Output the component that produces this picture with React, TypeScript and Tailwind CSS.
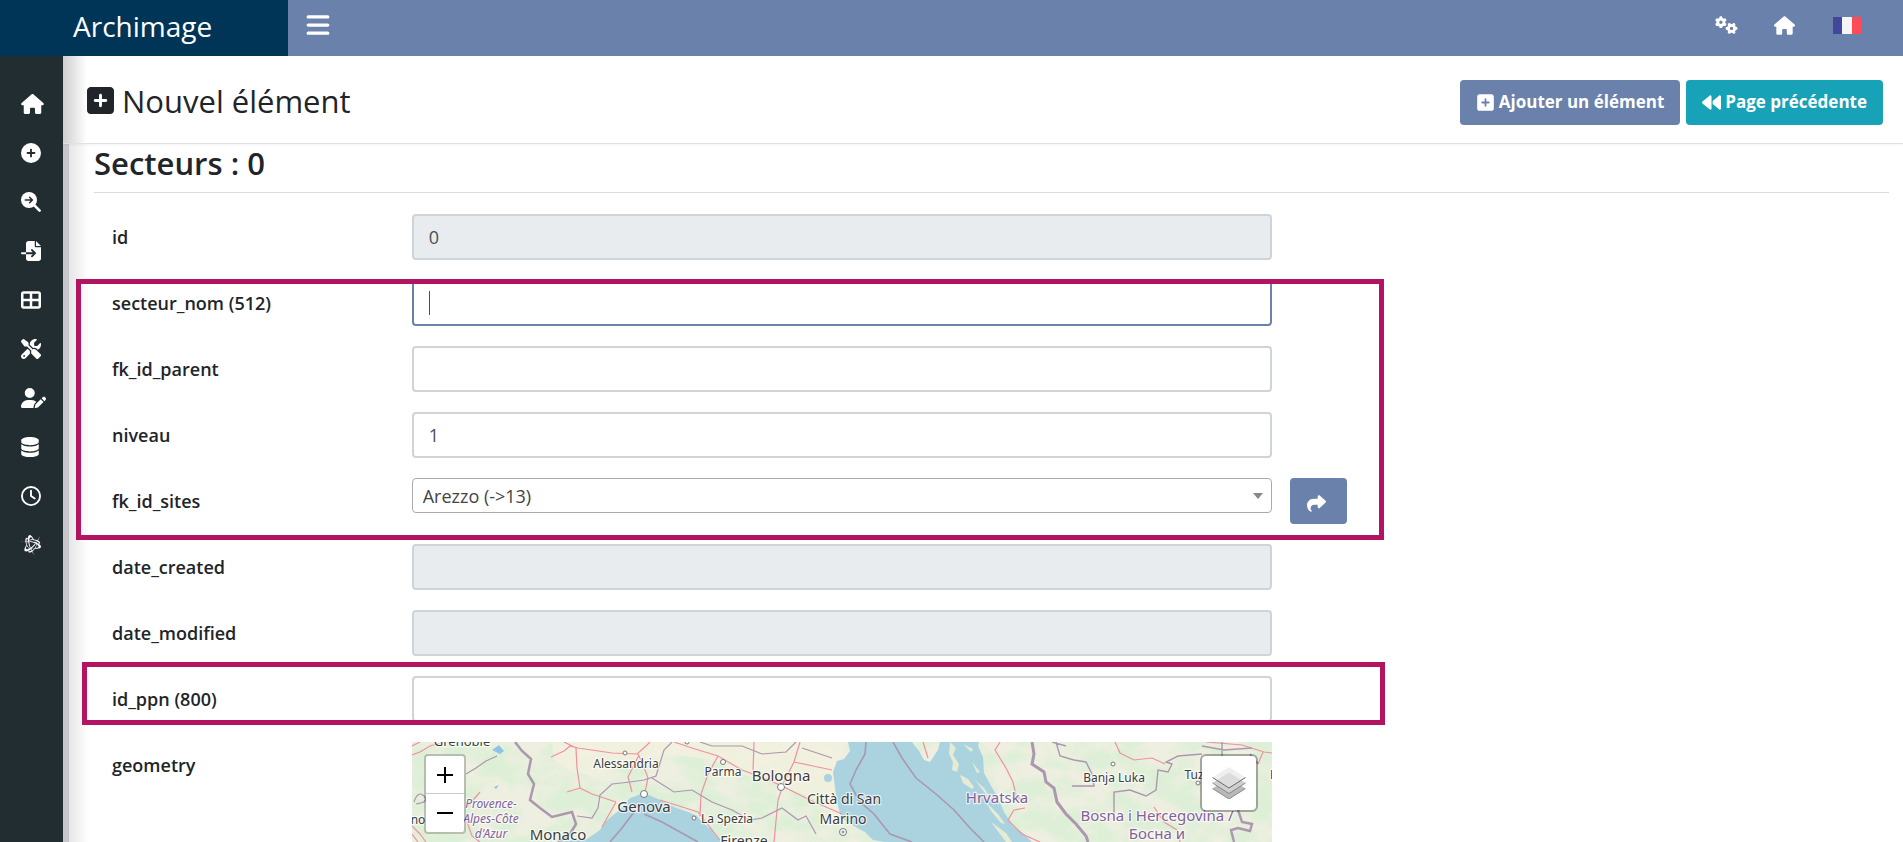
import React from 'react';
import {
  FaBackward,
  FaBars,
  FaBattleNet,
  FaCirclePlus,
  FaDatabase,
  FaFileImport,
  FaGears,
  FaHouse,
  FaRegClock,
  FaScrewdriverWrench,
  FaShare,
  FaSquarePlus,
  FaTableCellsLarge,
  FaUserPen,
} from 'react-icons/fa6';

interface Field {
  name: string;
  label: string;
  value?: string;
  readOnly?: boolean;
  focused?: boolean;
}

const SearchArrow: React.FC<{ className?: string }> = ({ className }) => (
  <svg className={className} viewBox="0 0 20 20" aria-hidden="true">
    <circle cx="8" cy="8" r="8" fill="currentColor" />
    <path d="M13 13l5.6 5.6" stroke="currentColor" strokeWidth="2.6" strokeLinecap="round" />
    <path d="M4.3 8h7M8.6 5.2L11.4 8l-2.8 2.8" fill="none" stroke="#222d32" strokeWidth="1.5" strokeLinecap="round" strokeLinejoin="round" />
  </svg>
);

const menu = [
  { label: 'Accueil', icon: <FaHouse className="h-5 w-[23px]" /> },
  { label: 'Ajouter', icon: <FaCirclePlus className="size-5" /> },
  { label: 'Rechercher', icon: <SearchArrow className="size-5" /> },
  { label: 'Importer', icon: <FaFileImport className="size-5" /> },
  { label: 'Tables', icon: <FaTableCellsLarge className="size-5" /> },
  { label: 'Outils', icon: <FaScrewdriverWrench className="size-5" /> },
  { label: 'Utilisateurs', icon: <FaUserPen className="h-5 w-[25px]" /> },
  { label: 'Base de données', icon: <FaDatabase className="h-5 w-[18px]" /> },
  { label: 'Historique', icon: <FaRegClock className="size-5" /> },
  { label: 'Réseau', icon: <FaBattleNet className="size-5" /> },
];

const FieldRow: React.FC<{ field: Field }> = ({ field }) => (
  <div className="flex">
    <label htmlFor={field.name} className="w-1/6 pl-3 pt-[9px] text-lg leading-7 font-semibold">
      {field.label}
    </label>
    <div className="relative w-1/2 px-[15px]">
      <input
        id={field.name}
        type="text"
        defaultValue={field.value}
        readOnly={field.readOnly}
        autoFocus={field.focused}
        className="block h-[46px] w-full rounded border-2 border-[#ced4da] bg-white px-[15px] text-lg text-[#495057] caret-transparent outline-none read-only:bg-[#e9ecef] focus:border-[#6a81ab]"
      />
      {field.focused && <span className="pointer-events-none absolute top-[11px] left-8 h-6 w-px bg-[#495057]" />}
    </div>
  </div>
);

const road = { fill: 'none', stroke: '#f0919f', strokeWidth: 1.2 };
const border = { fill: 'none', stroke: '#ab97ae', strokeWidth: 1.5 };
const sea = '#aad3df';

const MapTiles: React.FC = () => (
  <svg
    className="absolute inset-0 h-full w-full font-['Noto_Sans','Open_Sans',sans-serif]"
    viewBox="0 0 860 400"
    preserveAspectRatio="xMinYMin slice"
    role="img"
    aria-label="Carte"
  >
    <defs>
      <filter id="forest" x="0" y="0" width="100%" height="100%">
        <feTurbulence type="fractalNoise" baseFrequency="0.03 0.045" numOctaves="6" seed="8" />
        <feColorMatrix values="0 0 0 0 0.73  0 0 0 0 0.86  0 0 0 0 0.68  0 4 0 0 -1.45" />
      </filter>
    </defs>
    <rect width="860" height="400" fill="#eeefe0" />
    <rect width="860" height="400" filter="url(#forest)" />
    {/* Po valley */}
    <path d="M140 0H436L426 18 421 30 424 56 405 58 370 44 330 32 300 18 270 14 250 12 222 24 180 34 160 30 142 18Z" fill="#f2f0de" opacity="0.8" />

    {/* Ligurian sea */}
    <path d="M146 100L160 98 175 97 188 88 193 80 205 70 218 56 232 51 246 57 262 65 276 70 285 74 290 80 300 88 304 94 309 100V400H146Z" fill={sea} />
    {/* Adriatic */}
    <path d="M436 0L438 9 432 17 425 19 421 30 423 45 425 60 429 75 438 82 453 90 461 98 473 100V400H640L620 100 612 92 601 84 592 70 585 54 578 42 572 31 571 15 566 4 567 0H528L526 8 518 20 512 18 507 9 500 0Z" fill={sea} />
    <path d="M538 0L544 6 541 13 547 22 545 30 540 28 541 20 537 12ZM548 33L556 37 562 45 560 47 551 41ZM560 20L568 30 565 31ZM551 2L561 7 559 10ZM563 38L572 46 579 56 576 55ZM574 60L586 72 593 82 589 81 579 69ZM579 80L594 91 600 100H594Z" fill="#e6ecd4" />
    <circle cx="416" cy="36" r="4" fill={sea} />
    <path d="M80 8l7-5 5 6-4 3zM82 45l5-2-3 4z" fill="#8fc3e4" />

    {/* roads */}
    <g {...road}>
      <path d="M0 13L8 10 18 4 32 0M0 4L8 0M0 84L8 92 14 100M0 92L6 100" />
      <path d="M139 15L152 9 158 4 166 6 200 11 225 12 234 4 238 0M152 0L164 6 165 26 168 46 180 52 204 60M155 50L168 46M227 13L216 35 220 50M233 50L236 36 230 20 226 12" />
      <path d="M262 0L280 6 306 14 330 28 352 36 370 44 398 58 430 72M342 0L341 30M388 0L382 20 372 40 366 58 362 100M382 20L420 28M306 14L296 32 289 52 288 74M248 58L286 70 308 98M190 85L204 60M55 80L60 94 68 100M68 50L56 64" />
      <path d="M511 0L516 16M588 0L583 8 594 26 601 40 604 54 613 60M613 66L602 68 596 78 610 92 628 100M703 0L708 11 722 18 740 16 753 22M742 65L752 80 765 88 768 100M794 0L830 3 852 10 860 11M851 10L846 22" />
    </g>
    {/* borders */}
    <g {...border}>
      <path d="M103 0L110 9 119 17 116 32 122 42 118 58 128 66 140 75 160 70 164 82 158 92 146 100" strokeWidth="2.5" />
      <path d="M85 14L74 19 64 26 54 32M165 74L180 76 186 66 188 53 200 42 218 40 232 38 244 34 252 8 260 0M240 36L262 50 280 48 300 60 320 68 338 78 350 76 370 66 386 78 394 74 404 92M384 0L374 10 350 12 330 4 300 4 288 0M420 16L390 6M2 60Q6 48 12 54T4 62" strokeWidth="1.2" />
      <path d="M222 70L210 86 198 100M232 72L250 80 268 90 286 100M454 0L453 12 444 28 438 42 448 60 462 72 478 92 500 100M481 0L490 16 504 36 524 52 542 68 558 86 572 100" strokeWidth="1.6" />
      <path d="M620 0L622 12 620 22 632 30 634 40 642 46 645 60 654 72 664 82 674 94 676 100" strokeWidth="3" />
      <path d="M644 0L648 14 662 18 674 20 680 32 682 44 660 44M702 78V50L718 48 734 54 744 48 746 28 756 30 760 22 754 20 766 14 790 12M654 4L640 0M790 4L812 8 840 6M810 0V14M846 22L838 12" strokeWidth="1.4" />
      <path d="M826 68L830 80 840 82 838 89 826 86 819 88 822 100" strokeWidth="2.4" />
    </g>

    {/* towns */}
    <g fill="#fff" stroke="#777" strokeWidth="1">
      <circle cx="232" cy="52" r="3.5" />
      <circle cx="369" cy="45" r="3.5" />
      <circle cx="213" cy="11" r="2" />
      <circle cx="311" cy="20" r="2.5" />
      <circle cx="282" cy="76" r="2" />
      <circle cx="275" cy="0" r="2" />
      <circle cx="431" cy="90" r="3.5" />
      <circle cx="431" cy="90" r="1" />
      <circle cx="701" cy="22" r="2" />
      <circle cx="786" cy="41" r="2" />
    </g>
    <g fill="#3d3d3d" stroke="#fff" strokeOpacity="0.7" strokeWidth="2.5" strokeLinejoin="round" paintOrder="stroke" textAnchor="middle" fontSize="12">
      <text x="50" y="4" fontSize="13">Grenoble</text>
      <text x="6" y="82">no</text>
      <text x="214" y="26">Alessandria</text>
      <text x="232" y="70" fontSize="15">Genova</text>
      <text x="146" y="98" fontSize="15">Monaco</text>
      <text x="315" y="81">La Spezia</text>
      <text x="311" y="34">Parma</text>
      <text x="369" y="39" fontSize="15">Bologna</text>
      <text x="432" y="62" fontSize="14">Città di San</text>
      <text x="431" y="82" fontSize="14">Marino</text>
      <text x="332" y="104" fontSize="14">Firenze</text>
      <text x="702" y="40">Banja Luka</text>
      <text x="787" y="37">Tuzla</text>
      <text x="862" y="37">B</text>
    </g>
    <g fill="#84619a" stroke="#fff" strokeOpacity="0.7" strokeWidth="2.5" strokeLinejoin="round" paintOrder="stroke" textAnchor="middle" fontSize="15">
      <g fontSize="12" fontStyle="italic">
        <text x="79" y="66">Provence-</text>
        <text x="79" y="81">Alpes-Côte</text>
        <text x="79" y="96">d'Azur</text>
      </g>
      <text x="585" y="61">Hrvatska</text>
      <text x="745" y="79">Bosna i Hercegovina /</text>
      <text x="745" y="97">Босна и</text>
    </g>
  </svg>
);

const LayersIcon: React.FC = () => (
  <svg className="h-8 w-[34px]" viewBox="0 0 34 32" aria-hidden="true">
    <path d="M17 11L33.5 21.5 17 32 .5 21.5Z" fill="#b9b9b9" />
    <path d="M.5 21.5L17 32 33.5 21.5" fill="none" stroke="#777" strokeWidth="0.8" />
    <path d="M17 5.5L33.5 16 17 26.5 .5 16Z" fill="#cfcfcf" />
    <path d="M.5 16L17 26.5 33.5 16" fill="none" stroke="#777" strokeWidth="0.8" />
    <path d="M17 0L33.5 10.5 17 21 .5 10.5Z" fill="#efefef" />
    <path d="M17 5.5L29 13 17 20.5 5 13Z" fill="#dcdcdc" />
    <path d="M.5 10.5L17 21 33.5 10.5" fill="none" stroke="#666" />
  </svg>
);

const FieldMap: React.FC = () => (
  <div className="relative h-[400px] overflow-hidden bg-[#f1f0e3]">
    <MapTiles />
    <div className="absolute top-3 left-3 flex w-[42px] flex-col rounded border-2 border-black/20 bg-white bg-clip-padding">
      <button type="button" aria-label="Zoom avant" className="flex h-[38px] items-center justify-center border-b border-[#ccc]">
        <svg className="size-4" viewBox="0 0 16 16" stroke="#000" strokeWidth="2"><path d="M0 8h16M8 0v16" /></svg>
      </button>
      <button type="button" aria-label="Zoom arrière" className="flex h-[38px] items-center justify-center">
        <svg className="size-4" viewBox="0 0 16 16" stroke="#000" strokeWidth="2"><path d="M0 8h16" /></svg>
      </button>
    </div>
    <button
      type="button"
      aria-label="Couches"
      className="absolute top-3 right-3.5 flex size-[58px] items-center justify-center rounded-md border-2 border-black/30 bg-white bg-clip-padding"
    >
      <LayersIcon />
    </button>
  </div>
);

const App: React.FC = () => {
  return (
    <div className="flex h-screen flex-col overflow-hidden bg-white font-['Open_Sans','Noto_Sans',sans-serif] text-[#212529]">
      <header className="flex h-14 shrink-0 bg-[#6a81ab] text-white">
        <a href="#" className="flex w-72 items-center bg-[#003558] pb-1 pl-[73px] text-[28px] leading-9">
          Archimage
        </a>
        <nav className="flex flex-1 items-center justify-between pr-[42px] pb-1.5 pl-[17px]">
          <button type="button" aria-label="Menu">
            <FaBars className="size-[26px]" />
          </button>
          <div className="flex items-center gap-9">
            <a href="#" aria-label="Paramètres"><FaGears className="h-[18px] w-[23px]" /></a>
            <a href="#" aria-label="Accueil"><FaHouse className="h-[19px] w-[21px]" /></a>
            <a href="#" aria-label="Français" className="pl-0.5">
              <svg className="h-[17px] w-7" viewBox="0 0 28 17">
                <rect width="9" height="17" fill="#41479b" />
                <rect x="9" width="10" height="17" fill="#f5f5f5" />
                <rect x="19" width="9" height="17" fill="#ff4b55" />
              </svg>
            </a>
          </div>
        </nav>
      </header>

      <div className="flex min-h-0 flex-1">
        <aside className="w-[63px] shrink-0 bg-[#222d32] pt-[38px] pl-[21px] text-white">
          <ul className="flex flex-col gap-[29px]">
            {menu.map((item) => (
              <li key={item.label}>
                <a href="#" aria-label={item.label} className="flex h-5 items-center">{item.icon}</a>
              </li>
            ))}
          </ul>
        </aside>

        <main className="flex min-w-0 flex-1 flex-col">
          <div className="z-10 flex h-[88px] shrink-0 items-center justify-between border-b border-[#dee2e6] bg-linear-to-r from-[#cfcfcf] to-white to-[24px] pr-5 pl-6 shadow-xs">
            <h1 className="flex items-center gap-2 pt-0.5 text-[31px] leading-10">
              <FaSquarePlus className="h-[31px] w-[27px]" />
              Nouvel élément
            </h1>
            <div className="flex gap-1.5 pt-[5px] text-[17px] font-bold text-white">
              <button type="button" className="flex h-[45px] items-center gap-1 rounded bg-[#6a81ab] px-4">
                <FaSquarePlus className="size-[19px]" />
                Ajouter un élément
              </button>
              <button type="button" className="flex h-[45px] items-center gap-1 rounded bg-[#17a2b8] px-4">
                <FaBackward className="size-[19px]" />
                Page précédente
              </button>
            </div>
          </div>

          <div className="flex min-h-0 flex-1">
            <div className="w-1.5 shrink-0 bg-[#c6c6cb]" />
            <div className="min-w-0 flex-1 bg-linear-to-r from-[#e6e6e6] to-white to-[20px] pr-3.5 pl-[25px]">
              <h2 className="border-b border-[#dcdcdc] pt-px pb-[11px] text-[31px] leading-9 font-semibold">Secteurs : 0</h2>
              <form className="flex flex-col gap-5 pt-[21px] pr-[9px] pl-1.5" onSubmit={(e) => e.preventDefault()}>
                <FieldRow field={{ name: 'id', label: 'id', value: '0', readOnly: true }} />

                <div className="relative flex flex-col gap-5">
                  <FieldRow field={{ name: 'secteur_nom', label: 'secteur_nom (512)', focused: true }} />
                  <FieldRow field={{ name: 'fk_id_parent', label: 'fk_id_parent' }} />
                  <FieldRow field={{ name: 'niveau', label: 'niveau', value: '1' }} />
                  <div className="flex">
                    <label htmlFor="fk_id_sites" className="w-1/6 pl-3 pt-[9px] text-lg leading-7 font-semibold">
                      fk_id_sites
                    </label>
                    <div className="relative w-1/2 px-[15px]">
                      <select
                        id="fk_id_sites"
                        className="block h-[35px] w-full appearance-none rounded border border-[#aaa] bg-white px-2.5 text-lg leading-7 text-[#444]"
                      >
                        <option>Arezzo (-&gt;13)</option>
                      </select>
                      <span className="pointer-events-none absolute top-[15px] right-6 border-x-[5px] border-t-[6px] border-x-transparent border-t-[#888]" />
                    </div>
                    <div className="pl-[3px]">
                      <button type="button" aria-label="Ouvrir le site" className="flex h-[46px] w-[57px] items-center justify-center rounded bg-[#6a81ab] pt-1 pr-1 text-white">
                        <FaShare className="size-[19px]" />
                      </button>
                    </div>
                  </div>
                  <div className="pointer-events-none absolute -top-px -bottom-4 -left-6 w-[73.5%] border-5 border-[#b31462]" />
                </div>

                <FieldRow field={{ name: 'date_created', label: 'date_created', readOnly: true }} />
                <FieldRow field={{ name: 'date_modified', label: 'date_modified', readOnly: true }} />

                <div className="relative">
                  <FieldRow field={{ name: 'id_ppn', label: 'id_ppn (800)' }} />
                  <div className="pointer-events-none absolute -top-3.5 -bottom-[3px] -left-[18px] w-[73.2%] border-5 border-[#b31462]" />
                </div>

                <div className="flex">
                  <span className="w-1/6 pl-3 pt-[9px] text-lg leading-7 font-semibold">geometry</span>
                  <div className="w-1/2 px-[15px]">
                    <FieldMap />
                  </div>
                </div>
              </form>
            </div>
          </div>
        </main>
      </div>
    </div>
  );
};

export default App;
